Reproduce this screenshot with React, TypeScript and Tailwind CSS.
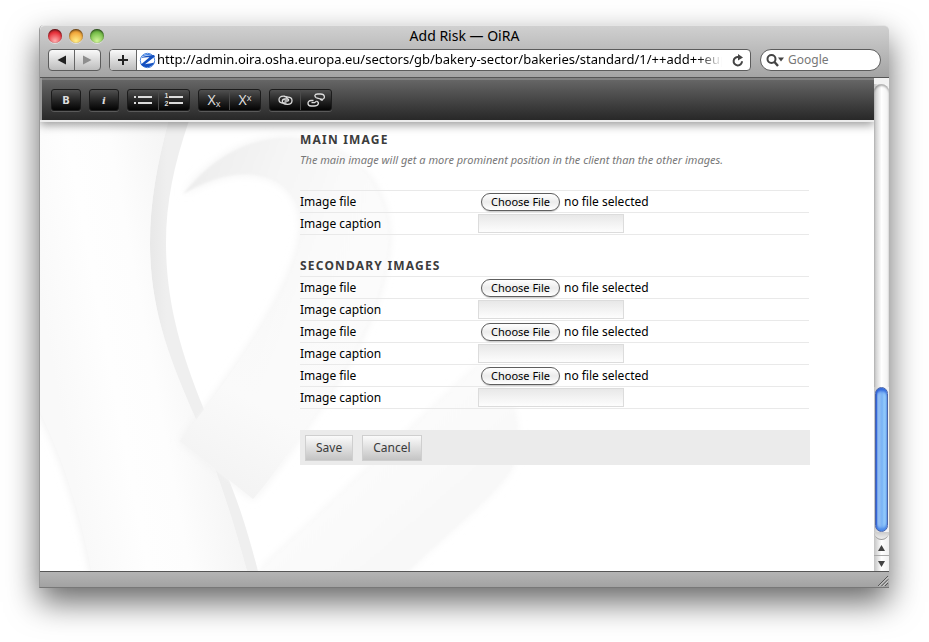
import { useRef, useState, type ReactNode } from "react";

function Ribbon() {
  return (
    <svg
      className="pointer-events-none absolute left-0 top-0"
      width="834"
      height="449"
      viewBox="40 122 834 449"
      aria-hidden="true"
    >
      <defs>
        <filter id="soft" x="-10%" y="-10%" width="120%" height="120%">
          <feGaussianBlur stdDeviation="5" />
        </filter>
        <filter id="edge" x="-10%" y="-10%" width="120%" height="120%">
          <feGaussianBlur stdDeviation="1" />
        </filter>
        <linearGradient id="band" gradientUnits="userSpaceOnUse" x1="40" y1="300" x2="200" y2="270">
          <stop offset="0" stopColor="#f9f9f9" />
          <stop offset="0.35" stopColor="#fefefe" />
          <stop offset="0.6" stopColor="#fdfdfd" />
          <stop offset="1" stopColor="#f4f4f4" />
        </linearGradient>
        <linearGradient id="strip" gradientUnits="userSpaceOnUse" x1="150" y1="0" x2="167" y2="0" spreadMethod="pad">
          <stop offset="0" stopColor="#e8e8e8" />
          <stop offset="1" stopColor="#efefef" />
        </linearGradient>
        <linearGradient id="hook" gradientUnits="userSpaceOnUse" x1="200" y1="170" x2="390" y2="240">
          <stop offset="0" stopColor="#eeeeee" />
          <stop offset="0.4" stopColor="#f6f6f6" />
          <stop offset="0.7" stopColor="#fafafa" />
          <stop offset="1" stopColor="#fbfbfb" />
        </linearGradient>
        <linearGradient id="tail" gradientUnits="userSpaceOnUse" x1="340" y1="300" x2="230" y2="490">
          <stop offset="0" stopColor="#fafafa" stopOpacity="0" />
          <stop offset="0.6" stopColor="#fafafa" />
          <stop offset="1" stopColor="#f3f3f3" />
        </linearGradient>
        <linearGradient id="leg" gradientUnits="userSpaceOnUse" x1="370" y1="440" x2="440" y2="520">
          <stop offset="0" stopColor="#fbfbfb" />
          <stop offset="0.5" stopColor="#fafafa" />
          <stop offset="1" stopColor="#f8f8f8" />
        </linearGradient>
      </defs>

      <path d="M478 366C420 420 340 495 258 571H408C450 530 490 500 508 474C526 448 520 385 478 366Z" fill="#f6f6f6" filter="url(#soft)" />
      <path d="M478 366C420 420 340 495 258 571H408C450 530 490 500 508 474C526 448 520 385 478 366Z" fill="url(#leg)" filter="url(#edge)" />

      <path d="M34 400C62 455 80 510 92 575H248C232 515 215 465 195 417C170 360 150 310 150 243C150 200 158 160 170 115H34Z" fill="#eeeeee" filter="url(#soft)" />
      <path d="M170 115C158 160 150 200 150 243C150 310 170 360 195 417C215 465 232 515 248 575H259C250 540 240 505 224 468L203 407C180 350 166 300 166 243C166 200 175 160 191 115Z" fill="url(#strip)" />
      <path d="M34 400C62 455 80 510 92 575H248C232 515 215 465 195 417C170 360 150 310 150 243C150 200 158 160 170 115H34Z" fill="url(#band)" />

      <path d="M183 194C215 155 250 138 287 138C345 140 388 180 389 237C387 300 350 365 313 417C292 447 272 478 253 499L180 441L203 411C235 368 262 330 280 294C295 264 303 238 301 220C299 195 280 175 247 174C222 174 205 182 183 194Z" fill="#f1f1f1" filter="url(#soft)" />
      <path d="M183 194C215 155 250 138 287 138C345 140 388 180 389 237C387 300 350 365 313 417C292 447 272 478 253 499L180 441L203 411C235 368 262 330 280 294C295 264 303 238 301 220C299 195 280 175 247 174C222 174 205 182 183 194Z" fill="url(#hook)" filter="url(#edge)" />
      <path d="M389 237C387 300 350 365 313 417C292 447 272 478 253 499L180 441L203 411C235 368 262 330 280 294Z" fill="url(#tail)" />
    </svg>
  );
}

function Light({ color, label }: { color: string; label: string }) {
  return (
    <button
      type="button"
      aria-label={label}
      className={`h-3.5 w-3.5 rounded-full shadow-[inset_0_1px_2px_rgba(0,0,0,0.6),0_1px_0_rgba(255,255,255,0.5)] ${color}`}
    />
  );
}

function ToolGroup({ children }: { children: ReactNode }) {
  return (
    <div className="flex h-[22px] divide-x divide-[#4a4a4a] overflow-hidden rounded-[3px] border border-[#1c1c1c] bg-linear-to-b from-[#505050] to-[#050505] shadow-[0_1px_0_#5a5a5a]">
      {children}
    </div>
  );
}

function Tool({ label, wide, children }: { label: string; wide?: boolean; children: ReactNode }) {
  return (
    <button
      type="button"
      aria-label={label}
      className={`flex items-center justify-center text-[#dcdcdc] ${wide ? "w-[31px] last:w-[30px]" : "w-7"}`}
    >
      {children}
    </button>
  );
}

function FileRow({ id }: { id: string }) {
  const input = useRef<HTMLInputElement>(null);
  const [name, setName] = useState("no file selected");
  return (
    <div className="flex h-[22px] items-center border-b border-[#e9e9e9]">
      <label htmlFor={id} className="w-[178px]">
        Image file
      </label>
      <div className="relative flex items-center gap-1 pl-[3px]">
        <input
          ref={input}
          id={id}
          type="file"
          className="sr-only"
          onChange={(e) => setName(e.target.files?.[0]?.name ?? "no file selected")}
        />
        <button
          type="button"
          onClick={() => input.current?.click()}
          className="h-[18px] w-[79px] rounded-full border border-[#5e5e5e] bg-linear-to-b from-white via-[#ececec] to-white text-[11px] leading-4 shadow-[0_1px_1px_rgba(0,0,0,0.2)]"
        >
          Choose File
        </button>
        <span>{name}</span>
      </div>
    </div>
  );
}

function CaptionRow({ id }: { id: string }) {
  return (
    <div className="flex h-[22px] items-center border-b border-[#e9e9e9]">
      <label htmlFor={id} className="w-[178px]">
        Image caption
      </label>
      <input
        id={id}
        type="text"
        className="h-[19px] w-[146px] border border-[#dcdcdc] bg-linear-to-b from-[#e8e8e8] to-[#fdfdfd] px-1"
      />
    </div>
  );
}

function Browser() {
  return (
    <header className="flex flex-col rounded-t-[5px] border-b border-[#555] border-t border-t-[#e4e4e4] bg-linear-to-b from-[#d0d0d0] to-[#a4a4a4] px-2 pb-[6px]">
      <div className="grid h-[23px] grid-cols-[1fr_auto_1fr] items-start">
        <div className="flex gap-[7px] pt-[3px]">
          <Light label="Close" color="bg-[radial-gradient(circle_at_50%_85%,#ffb0b0,#e8323c_60%,#9c1a20)]" />
          <Light label="Minimize" color="bg-[radial-gradient(circle_at_50%_85%,#fff08a,#f2a83c_60%,#a8641c)]" />
          <Light label="Zoom" color="bg-[radial-gradient(circle_at_50%_85%,#d2f59a,#78bf4a_60%,#3c7a28)]" />
        </div>
        <h1 className="text-[14px] leading-5">Add Risk — OiRA</h1>
      </div>
      <div className="flex h-[22px] items-stretch">
        <div className="mr-2 flex w-[53px] divide-x divide-[#666] rounded-[4px] border border-[#5c5c5c] bg-linear-to-b from-[#fafafa] to-[#bdbdbd]">
          <button type="button" aria-label="Back" className="flex flex-1 items-center justify-center">
            <svg width="9" height="10" viewBox="0 0 9 10"><path d="M9 0.5V9.5L0.5 5Z" fill="#222" /></svg>
          </button>
          <button type="button" aria-label="Forward" className="flex flex-1 items-center justify-center">
            <svg width="9" height="10" viewBox="0 0 9 10"><path d="M0 0.5V9.5L8.5 5Z" fill="#8e8e8e" /></svg>
          </button>
        </div>
        <div className="flex min-w-0 flex-1 overflow-hidden rounded-[4px] border border-[#5c5c5c] bg-white">
          <button
            type="button"
            aria-label="Add bookmark"
            className="flex w-[27px] shrink-0 items-center justify-center border-r border-[#666] bg-linear-to-b from-[#fafafa] to-[#bdbdbd]"
          >
            <svg width="10" height="10" viewBox="0 0 10 10"><path d="M5 0V10M0 5H10" stroke="#222" strokeWidth="2" /></svg>
          </button>
          <svg className="ml-[2px] shrink-0 self-center" width="17" height="17" viewBox="0 0 17 17">
            <circle cx="8.5" cy="8.5" r="7.2" fill="#fff" stroke="#4c86de" strokeWidth="1" />
            <path d="M2 4.6C5 1.6 10 1.2 13.500 3.400C10 3.200 5.500 3.600 2 4.600Z" fill="#3f7fe0" />
            <path d="M15 3L16 4.500L6 12.200C9.500 11.500 12.500 11.600 15.500 10.600C13.500 14.500 8.500 16.500 4.500 14.600C3 13.800 1.800 12.600 1.300 11.200L2.500 12L10.500 5.200C7.500 5 5 5.200 2.500 5.800L3 5C6.500 4 11 3.200 15 3Z" fill="#1450c0" />
          </svg>
          <input
            type="text"
            aria-label="Address"
            defaultValue="http://admin.oira.osha.europa.eu/sectors/gb/bakery-sector/bakeries/standard/1/++add++eup"
            className="ml-px mr-2 min-w-0 flex-1 bg-transparent text-[13px] outline-none mask-[linear-gradient(to_right,#000_calc(100%-24px),transparent)]"
          />
          <button type="button" aria-label="Reload" className="mr-1 flex w-4 items-center justify-center">
            <svg width="12" height="13" viewBox="0 0 12 13">
              <path d="M10 7.200A4.200 4.200 0 1 1 6.500 3.100" fill="none" stroke="#444" strokeWidth="2" />
              <path d="M6 0L11 3.500L6 6.500Z" fill="#444" />
            </svg>
          </button>
        </div>
        <div className="ml-[9px] flex w-[121px] items-center gap-[3px] rounded-full border border-[#5c5c5c] bg-white pl-[5px]">
          <svg className="shrink-0" width="19" height="13" viewBox="0 0 19 13" aria-hidden="true">
            <circle cx="5.500" cy="5" r="4" fill="none" stroke="#444" strokeWidth="2" />
            <path d="M8.500 8L12 12" stroke="#444" strokeWidth="2.400" />
            <path d="M12 3.500H18L15 7.500Z" fill="#444" />
          </svg>
          <input type="search" aria-label="Search" placeholder="Google" className="min-w-0 flex-1 bg-transparent text-[12px] outline-none placeholder:text-[#777]" />
        </div>
      </div>
    </header>
  );
}

function EditorToolbar() {
  return (
    <div className="relative z-10 border-b-2 border-[#ececec] bg-[#9a9a9a] shadow-[0_3px_9px_rgba(0,0,0,0.4)]">
      <div className="ml-0.5 flex h-[42px] gap-2 border-t-2 border-[#828282] bg-linear-to-b from-[#666] to-[#282828] pl-[9px] pt-[9px]">
        <ToolGroup>
          <Tool label="Bold"><b className="font-['DejaVu_Sans'] text-[10px]">B</b></Tool>
        </ToolGroup>
        <ToolGroup>
          <Tool label="Italic"><b className="font-['DejaVu_Serif'] text-[10px] italic">i</b></Tool>
        </ToolGroup>
        <ToolGroup>
          <Tool label="Bulleted list" wide>
            <svg width="20" height="10" viewBox="0 0 20 10" fill="currentColor">
              <path d="M1 1h2v2H1zM1 7h2v2H1zM5 1h14v2H5zM5 7h14v2H5z" />
            </svg>
          </Tool>
          <Tool label="Numbered list" wide>
            <span className="flex flex-col font-['Liberation_Sans'] text-[7px] font-bold leading-[8px]">
              <span>1</span>
              <span>2</span>
            </span>
            <svg width="15" height="10" viewBox="0 0 15 10" fill="currentColor">
              <path d="M1 1h14v2H1zM1 7h14v2H1z" />
            </svg>
          </Tool>
        </ToolGroup>
        <ToolGroup>
          <Tool label="Subscript" wide><span className="text-[14px] leading-5">X<sub className="text-[9px]">x</sub></span></Tool>
          <Tool label="Superscript" wide><span className="text-[14px] leading-5">X<sup className="text-[9px]">x</sup></span></Tool>
        </ToolGroup>
        <ToolGroup>
          <Tool label="Insert link" wide>
            <svg width="15" height="11" viewBox="0 0 15 11" fill="none" stroke="currentColor" strokeWidth="1.300">
              <path d="M9.500 3.800C8.500 1.300 6.800 1.200 5.500 1.200C2.500 1.200 1 2.600 1 4.700C1 7 3 8 5.500 8H8.500" />
              <path d="M9.800 2.200C12.500 2.200 14 3.700 14 5.700C14 8 12 9.300 9.300 9.300C6.500 9.300 4.300 8.300 4.300 6.300C4.300 4.800 5.500 4 7 4H9.500C11 4 11 6 9.500 6H6.500" />
              <path d="M6 1.300L10 2.200" />
            </svg>
          </Tool>
          <Tool label="Remove link" wide>
            <svg width="18" height="14" viewBox="0 0 18 14" fill="none" stroke="currentColor" strokeWidth="1.300">
              <path d="M9.500 4.800C7 3.500 7.500 1 10.500 1H13.500C18.500 1 18.500 6.500 14.500 6.500H13" />
              <path d="M9.500 4.800L15 6.500V8" />
              <path d="M6.500 7.500H4C0 7.500 0 13 4 13H7C12 13 12.500 9.300 9.500 8.200" />
              <path d="M4.500 9.700H7.500L9.500 8.200" />
            </svg>
          </Tool>
        </ToolGroup>
      </div>
    </div>
  );
}

function ScrollBar() {
  return (
    <div className="flex w-[15px] shrink-0 flex-col bg-linear-to-r from-[#c4c4c4] via-white to-[#f0f0f0]" aria-hidden="true">
      <div className="h-1.5 bg-[#f2f2f2]" />
      <div className="flex-1 rounded-t-full shadow-[inset_0_2px_2px_rgba(0,0,0,0.3)]" />
      <div className="mx-px h-[145px] rounded-full border border-[#4a64a8] bg-linear-to-r from-[#9cc4f2] from-20% via-[#78b2f6] via-55% to-[#b8eaff] shadow-[inset_0_3px_3px_#2f66dc,inset_0_-3px_3px_#4a88e8,inset_1px_0_1px_#2748c8]" />
      <div className="h-2 rounded-b-full border-b border-[#999] bg-linear-to-b from-[#ccc] to-[#eee]" />
      <div className="flex h-[15px] items-center justify-center">
        <svg width="7" height="6" viewBox="0 0 7 6"><path d="M3.500 0L7 6H0Z" fill="#444" /></svg>
      </div>
      <div className="flex h-4 items-center justify-center border-t border-[#aaa]">
        <svg width="7" height="6" viewBox="0 0 7 6"><path d="M0 0H7L3.500 6Z" fill="#444" /></svg>
      </div>
    </div>
  );
}

const headingClass = "text-[12px] font-bold uppercase leading-5 tracking-widest text-[#3c3c3c]";
const buttonClass = "h-[26px] border border-[#cfcfcf] bg-linear-to-b from-[#fbfbfb] to-[#c4c4c4] px-2.5 text-[12px] leading-6 text-[#3a3a3a]";

export default function App() {
  return (
    <div className="flex min-h-screen flex-col bg-white pb-[54px] pl-[39px] pr-10 pt-[25px] font-['Noto_Sans','Lucida_Grande',sans-serif] text-[12px] text-black">
      <div className="flex flex-1 flex-col rounded-t-[5px] border-b border-l border-b-[#777] border-l-[#999] bg-white shadow-[0_14px_32px_rgba(0,0,0,0.6)]">
        <Browser />
        <div className="flex flex-1">
          <div className="relative flex min-w-0 flex-1 flex-col overflow-hidden">
            <EditorToolbar />
            <main className="relative flex-1">
              <Ribbon />
              <form className="relative flex flex-col pb-4 pl-[260px] pr-16 pt-2" onSubmit={(e) => e.preventDefault()}>
                <h2 className={headingClass}>Main image</h2>
                <p className="mb-5 text-[11px] italic leading-5 text-[#777]">
                  The main image will get a more prominent position in the client than the other images.
                </p>
                <div className="mr-px border-t border-[#e9e9e9]">
                  <FileRow id="main-file" />
                  <CaptionRow id="main-caption" />
                </div>
                <h2 className={`mt-[21px] ${headingClass}`}>Secondary images</h2>
                <div className="mr-px border-t border-[#e9e9e9]">
                  <FileRow id="file-1" />
                  <CaptionRow id="caption-1" />
                  <FileRow id="file-2" />
                  <CaptionRow id="caption-2" />
                  <FileRow id="file-3" />
                  <CaptionRow id="caption-3" />
                </div>
                <div className="mt-[21px] flex h-[35px] items-center gap-[9px] bg-[#ebebeb] px-[5px]">
                  <button type="submit" className={buttonClass}>Save</button>
                  <button type="button" className={buttonClass}>Cancel</button>
                </div>
              </form>
            </main>
          </div>
          <ScrollBar />
        </div>
        <footer className="flex h-4 items-end justify-end border-t border-[#555] bg-linear-to-b from-[#b4b4b4] to-[#a2a2a2]">
          <svg width="13" height="13" viewBox="0 0 13 13" aria-hidden="true">
            <path d="M2 12L12 2M5.500 12L12 5.500M9 12L12 9" stroke="#555" />
            <path d="M3 12.500L12.500 3M6.500 12.500L12.500 6.500" stroke="#ddd" strokeWidth="0.700" />
          </svg>
        </footer>
      </div>
    </div>
  );
}
